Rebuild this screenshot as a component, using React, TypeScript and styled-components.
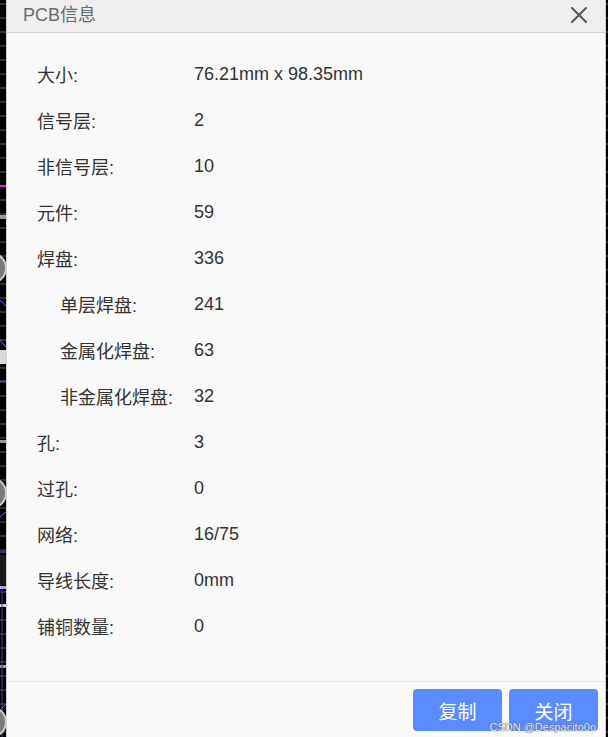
import React from 'react';
import styled, { createGlobalStyle } from 'styled-components';

const GlobalStyle = createGlobalStyle`
  html, body {
    margin: 0;
    padding: 0;
    background: #000;
    overflow: hidden;
  }
  * {
    box-sizing: border-box;
  }
`;

interface InfoRow {
  label: string;
  value: string;
  sub?: boolean;
}

const rows: InfoRow[] = [
  { label: '大小:', value: '76.21mm x 98.35mm' },
  { label: '信号层:', value: '2' },
  { label: '非信号层:', value: '10' },
  { label: '元件:', value: '59' },
  { label: '焊盘:', value: '336' },
  { label: '单层焊盘:', value: '241', sub: true },
  { label: '金属化焊盘:', value: '63', sub: true },
  { label: '非金属化焊盘:', value: '32', sub: true },
  { label: '孔:', value: '3' },
  { label: '过孔:', value: '0' },
  { label: '网络:', value: '16/75' },
  { label: '导线长度:', value: '0mm' },
  { label: '铺铜数量:', value: '0' }
];

// bits of the pcb canvas peeking out behind the dialog
const CanvasEdge = ({ width }: { width: number }) => {
  const ticks = [];
  for (let y = 4; y < 737; y += 14) {
    ticks.push(<line key={ y } x1="0" x2={ width } y1={ y } y2={ y } stroke="#5a5a5a" strokeWidth="1" />);
  }

  return (
    <EdgeSvg width={ width } height="737" viewBox={ `0 0 ${ width } 737` }>
      <rect width={ width } height="737" fill="#000" />
      { ticks }
      { width > 4 && (
        <>
          <line x1="0" x2={ width } y1="186" y2="186" stroke="#e020e0" strokeWidth="2" />
          <rect x="0" y="215" width={ width } height="4" fill="#9a9a9a" />
          <circle cx="-9" cy="268" r="15" fill="#7a7a7a" stroke="#cfcfcf" strokeWidth="2" />
          <line x1="0" x2={ width } y1="300" y2="306" stroke="#5a5aff" strokeWidth="1" />
          <line x1="0" x2={ width } y1="340" y2="347" stroke="#6a6aff" strokeWidth="1" />
          <rect x="0" y="350" width={ width } height="14" fill="#d8d8d8" />
          <line x1="0" x2={ width } y1="381" y2="381" stroke="#6060ff" strokeWidth="1" />
          <rect x="0" y="440" width={ width } height="3" fill="#9a9a9a" />
          <circle cx="-9" cy="493" r="15" fill="#7a7a7a" stroke="#cfcfcf" strokeWidth="2" />
          <line x1="0" x2={ width } y1="517" y2="512" stroke="#6060ff" strokeWidth="1" />
          <line x1="0" x2={ width } y1="552" y2="552" stroke="#6060ff" strokeWidth="1" />
          <line x1="0" x2={ width } y1="568" y2="556" stroke="#6060ff" strokeWidth="1" />
          <rect x="0" y="555" width={ width } height="30" fill="#1a1a1a" />
          <rect x="0" y="586" width={ width } height="3" fill="#a0a0ff" />
          <rect x="0" y="604" width={ width } height="3" fill="#cfcfcf" />
          <rect x="0" y="665" width={ width } height="3" fill="#9a9a9a" />
          <line x1="2" x2="2" y1="590" y2="737" stroke="#4040c0" strokeWidth="1" />
          <circle cx="-9" cy="722" r="15" fill="#7a7a7a" stroke="#cfcfcf" strokeWidth="2" />
          <line x1="0" x2={ width } y1="710" y2="704" stroke="#6060ff" strokeWidth="1" />
        </>
      ) }
    </EdgeSvg>
  );
};

const CloseIcon = () => (
  <svg width="18" height="18" viewBox="0 0 18 18">
    <path d="M2 2 L16 16 M16 2 L2 16" stroke="#555" strokeWidth="2" strokeLinecap="round" />
  </svg>
);

export const App = () => {
  return (
    <>
      <GlobalStyle />
      <Page>
        <CanvasEdge width={ 6 } />
        <Dialog>
          <Header>
            <Title>PCB信息</Title>
            <CloseButton type="button" aria-label="close">
              <CloseIcon />
            </CloseButton>
          </Header>
          <Body>
            {
              rows.map((row) => (
                <Row key={ row.label }>
                  <Label sub={ row.sub }>{ row.label }</Label>
                  <Value>{ row.value }</Value>
                </Row>
              ))
            }
          </Body>
          <Footer>
            <Button type="button">复制</Button>
            <Button type="button">关闭</Button>
            <Watermark>CSDN @Despacito0o</Watermark>
          </Footer>
        </Dialog>
        <CanvasEdge width={ 2 } />
      </Page>
    </>
  );
};

export default App;

const Page = styled.div`
  display: flex;
  width: 608px;
  height: 737px;
  background: #000;
`;

const EdgeSvg = styled.svg`
  display: block;
  flex-shrink: 0;
`;

const Dialog = styled.div`
  position: relative;
  display: flex;
  flex-direction: column;
  width: 600px;
  height: 737px;
  background: #f9f9f9;
  border-left: 1px solid #d0d0d0;
  border-right: 1px solid #cfcfcf;
  font-family: 'Liberation Sans', 'Noto Sans CJK SC', sans-serif;
`;

const Header = styled.div`
  display: flex;
  align-items: center;
  justify-content: space-between;
  height: 33px;
  padding: 0 17px 0 16px;
  background: #eeeeee;
  border-bottom: 1px solid #d4d4d4;
`;

const Title = styled.div`
  font-size: 18px;
  color: #6b6b6b;
  margin-top: -7px;
`;

const CloseButton = styled.button`
  display: flex;
  align-items: center;
  justify-content: center;
  padding: 0;
  margin-top: -3px;
  border: none;
  background: transparent;
  cursor: pointer;
`;

const Body = styled.div`
  flex: 1;
  padding: 18px 0 0 30px;
`;

const Row = styled.div`
  display: flex;
  align-items: center;
  height: 46px;
  font-size: 18px;
  color: #333;
`;

const Label = styled.div<{ sub?: boolean }>`
  width: 158px;
  padding-left: ${ (p) => (p.sub ? '23px' : '0') };
`;

const Value = styled.div`
  margin-left: -1px;
`;

const Footer = styled.div`
  position: relative;
  display: flex;
  justify-content: flex-end;
  gap: 7px;
  height: 56px;
  padding: 7px 7px 0 0;
  border-top: 1px solid #e6e6e6;
`;

const Button = styled.button`
  width: 89px;
  height: 42px;
  border: none;
  border-radius: 4px;
  background: #5a8bff;
  color: #fff;
  font-family: 'Liberation Sans', 'Noto Sans CJK SC', sans-serif;
  font-size: 19px;
  cursor: pointer;
`;

const Watermark = styled.div`
  position: absolute;
  right: 9px;
  bottom: 4px;
  font-family: 'Liberation Sans', sans-serif;
  font-size: 11px;
  color: rgba(255, 255, 255, 0.85);
  text-shadow: 0 0 1px #666, 0 0 1px #666;
`;
